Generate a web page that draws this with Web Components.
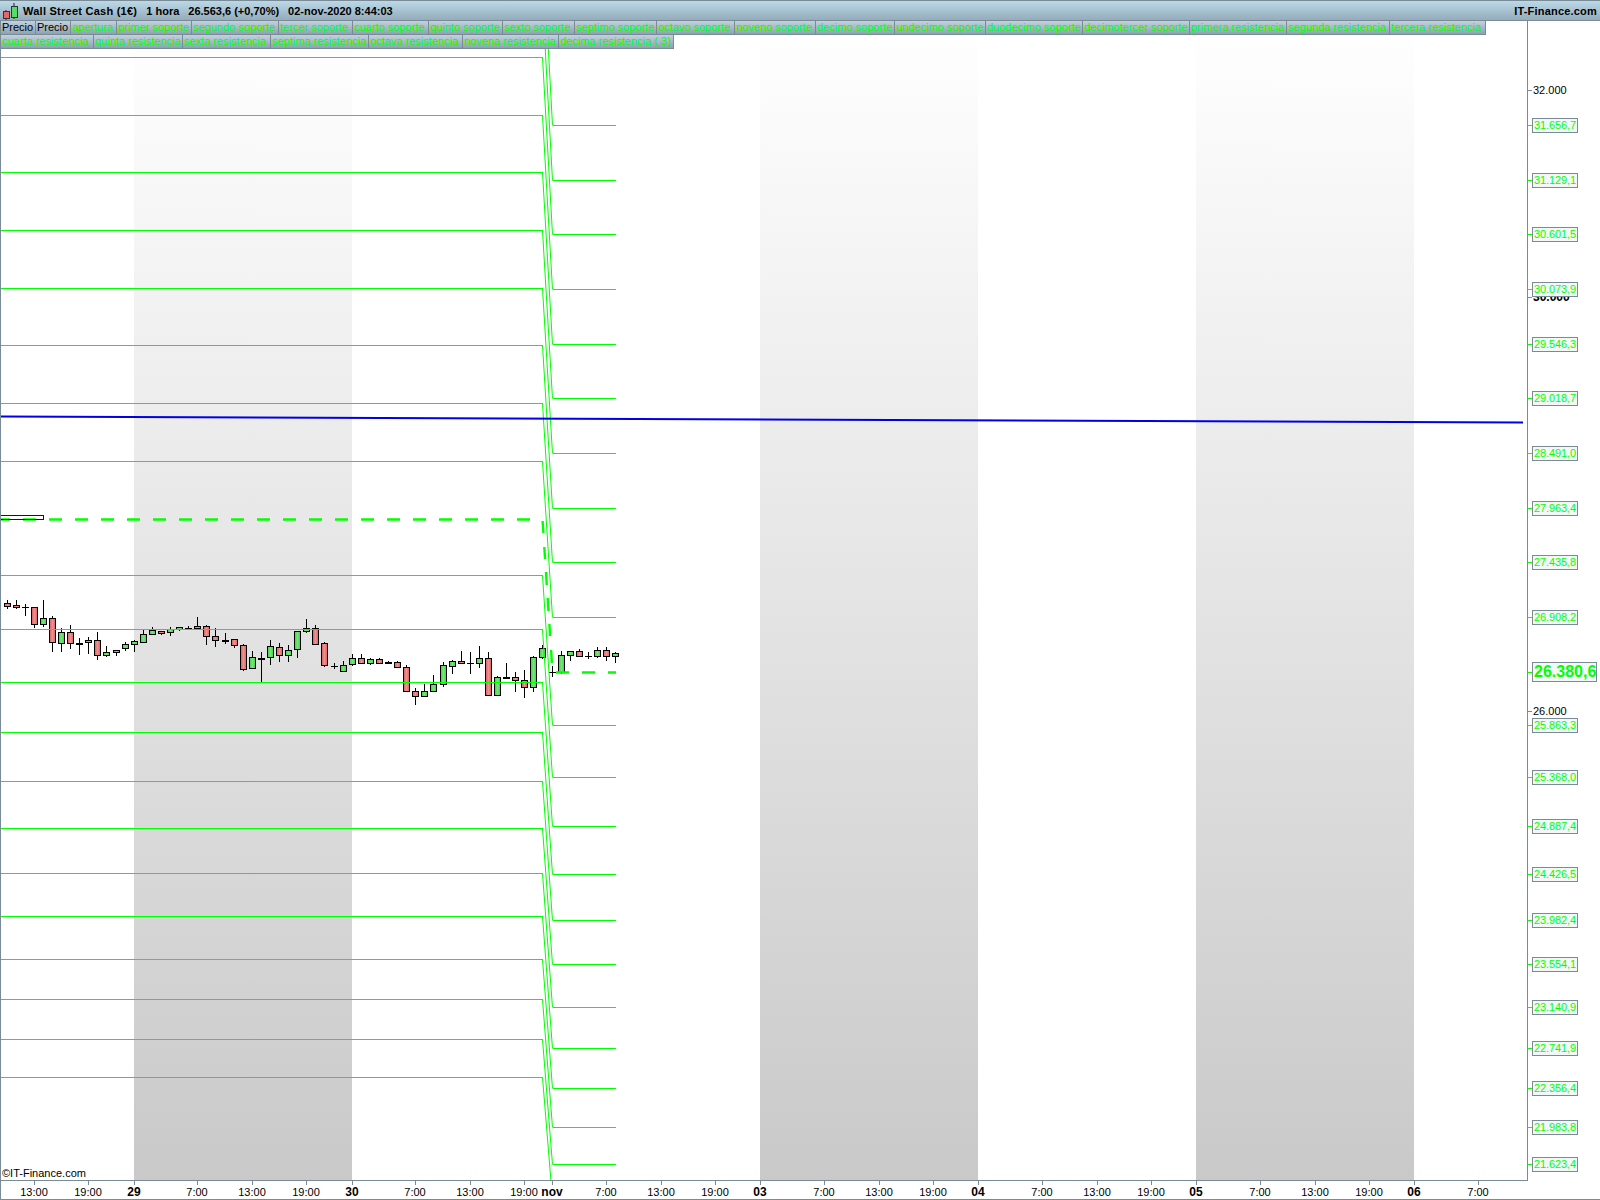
<!DOCTYPE html>
<html lang="es">
<head>
<meta charset="utf-8">
<title>Wall Street Cash</title>
<style>
  html, body { margin: 0; padding: 0; background: #fff; }
</style>
</head>
<body>
<chart-window>
  <title-bar slot="title">
    <span style="letter-spacing:.25px">Wall Street Cash (1€)</span>
    <span>1 hora</span>
    <span>26.563,6 (+0,70%)</span>
    <span>02-nov-2020 8:44:03</span>
    <span slot="right" style="letter-spacing:.2px">IT-Finance.com</span>
  </title-bar>
  <price-plot slot="plot">
    <legend-chip w="36" dark>Precio</legend-chip>
    <legend-chip w="36" dark>Precio</legend-chip>
    <legend-chip w="47">apertura</legend-chip>
    <legend-chip w="76">primer soporte</legend-chip>
    <legend-chip w="88">segundo soporte</legend-chip>
    <legend-chip w="75">tercer soporte</legend-chip>
    <legend-chip w="77">cuarto soporte</legend-chip>
    <legend-chip w="75">quinto soporte</legend-chip>
    <legend-chip w="73">sexto soporte</legend-chip>
    <legend-chip w="83">septimo soporte</legend-chip>
    <legend-chip w="79">octavo soporte</legend-chip>
    <legend-chip w="82">noveno soporte</legend-chip>
    <legend-chip w="80">decimo soporte</legend-chip>
    <legend-chip w="92">undecimo soporte</legend-chip>
    <legend-chip w="98">duodecimo soporte</legend-chip>
    <legend-chip w="108">decimotercer soporte</legend-chip>
    <legend-chip w="98">primera resistencia</legend-chip>
    <legend-chip w="104">segunda resistencia</legend-chip>
    <legend-chip w="97">tercera resistencia</legend-chip>
    <legend-chip w="94">cuarta resistencia</legend-chip>
    <legend-chip w="90">quinta resistencia</legend-chip>
    <legend-chip w="89">sexta resistencia</legend-chip>
    <legend-chip w="99">septima resistencia</legend-chip>
    <legend-chip w="95">octava resistencia</legend-chip>
    <legend-chip w="97">novena resistencia</legend-chip>
    <legend-chip w="116">decima resistencia ( 3)</legend-chip>
  </price-plot>
  <price-axis slot="axis">
    <price-tag y="90" kind="plain">32.000</price-tag>
    <price-tag y="297" kind="major">30.000</price-tag>
    <price-tag y="711" kind="plain">26.000</price-tag>
    <price-tag y="125">31.656,7</price-tag>
    <price-tag y="180">31.129,1</price-tag>
    <price-tag y="234">30.601,5</price-tag>
    <price-tag y="289">30.073,9</price-tag>
    <price-tag y="344">29.546,3</price-tag>
    <price-tag y="398">29.018,7</price-tag>
    <price-tag y="453">28.491,0</price-tag>
    <price-tag y="508">27.963,4</price-tag>
    <price-tag y="562">27.435,8</price-tag>
    <price-tag y="617">26.908,2</price-tag>
    <price-tag y="672" kind="current">26.380,6</price-tag>
    <price-tag y="725">25.863,3</price-tag>
    <price-tag y="777">25.368,0</price-tag>
    <price-tag y="826">24.887,4</price-tag>
    <price-tag y="874">24.426,5</price-tag>
    <price-tag y="920">23.982,4</price-tag>
    <price-tag y="964">23.554,1</price-tag>
    <price-tag y="1007">23.140,9</price-tag>
    <price-tag y="1048">22.741,9</price-tag>
    <price-tag y="1088">22.356,4</price-tag>
    <price-tag y="1127">21.983,8</price-tag>
    <price-tag y="1164">21.623,4</price-tag>
  </price-axis>
  <time-axis slot="time">
    <time-label x="34">13:00</time-label>
    <time-label x="88">19:00</time-label>
    <time-label x="134" major>29</time-label>
    <time-label x="197">7:00</time-label>
    <time-label x="252">13:00</time-label>
    <time-label x="306">19:00</time-label>
    <time-label x="352" major>30</time-label>
    <time-label x="415">7:00</time-label>
    <time-label x="470">13:00</time-label>
    <time-label x="524">19:00</time-label>
    <time-label x="552" major>nov</time-label>
    <time-label x="606">7:00</time-label>
    <time-label x="661">13:00</time-label>
    <time-label x="715">19:00</time-label>
    <time-label x="760" major>03</time-label>
    <time-label x="824">7:00</time-label>
    <time-label x="879">13:00</time-label>
    <time-label x="933">19:00</time-label>
    <time-label x="978" major>04</time-label>
    <time-label x="1042">7:00</time-label>
    <time-label x="1097">13:00</time-label>
    <time-label x="1151">19:00</time-label>
    <time-label x="1196" major>05</time-label>
    <time-label x="1260">7:00</time-label>
    <time-label x="1315">13:00</time-label>
    <time-label x="1369">19:00</time-label>
    <time-label x="1414" major>06</time-label>
    <time-label x="1478">7:00</time-label>
  </time-axis>
</chart-window>

<script>
const FRAME = '#7a8b98';
const SANS = '"Liberation Sans", Arial, sans-serif';

// Outer window: title on top, plot + price scale in the middle, time scale below
class ChartWindow extends HTMLElement {
    connectedCallback() {
        this.attachShadow({ mode: 'open' });
        this.shadowRoot.innerHTML = `
        <style>
          :host {
            display: grid;
            grid-template-rows: 21px 1160px 19px;
            grid-template-columns: 1527px 72px;
            width: 1599px;
            height: 1200px;
            border-left: 1px solid ${FRAME};
            font-family: ${SANS};
            font-size: 11px;
          }
          ::slotted([slot="title"]) { grid-column: 1 / 3; margin-left: -1px; }
          ::slotted([slot="time"]) { grid-column: 1 / 3; }
        </style>
        <slot name="title"></slot>
        <slot name="plot"></slot>
        <slot name="axis"></slot>
        <slot name="time"></slot>
        `;
    }
}
customElements.define('chart-window', ChartWindow);

class TitleBar extends HTMLElement {
    connectedCallback() {
        this.attachShadow({ mode: 'open' });
        this.shadowRoot.innerHTML = `
        <style>
          :host {
            display: flex;
            align-items: center;
            box-sizing: border-box;
            height: 21px;
            border-top: 1px solid ${FRAME};
            border-bottom: 1px solid ${FRAME};
            background: linear-gradient(#bcd8e6, #94acbb);
            font: bold 11px ${SANS};
            color: #000;
            padding-right: 3px;
          }
          svg { flex: none; margin-right: 4px; }
          .items { display: flex; gap: 9px; }
          .right { margin-left: auto; }
        </style>
        <svg width="19" height="19" viewBox="0 0 19 19">
          <path d="M6 9v2M6 18v1M14 2v3M14 17v1" stroke="#222" stroke-width="1" fill="none"/>
          <rect x="3.5" y="10.5" width="6" height="7" fill="#e8666a" stroke="#333"/>
          <rect x="11.5" y="5.5" width="6" height="11" fill="#55dd66" stroke="#333"/>
        </svg>
        <div class="items"><slot></slot></div>
        <div class="right"><slot name="right"></slot></div>
        `;
    }
}
customElements.define('title-bar', TitleBar);

// w is the chip width read off the chart; the neighbours share a border
class LegendChip extends HTMLElement {
    connectedCallback() {
        this.attachShadow({ mode: 'open' });
        this.shadowRoot.innerHTML = `
        <style>
          :host {
            display: block;
            box-sizing: border-box;
            width: ${this.getAttribute('w')}px;
            height: 15px;
            margin: 0 -1px -1px 0;
            padding: 0 0 0 1px;
            border: 1px solid ${FRAME};
            background: linear-gradient(#c2d2dd, #8da2b1);
            font: 11px/13px ${SANS};
            color: ${this.hasAttribute('dark') ? '#000' : '#00ff00'};
            white-space: nowrap;
          }
        </style>
        <slot></slot>
        `;
    }
}
customElements.define('legend-chip', LegendChip);

// The drawing area. Numbers are page pixels, measured on the chart.
const LEFT_LEVELS = [-59, -1, 57, 115, 172, 230, 288, 345, 403, 461, 575, 629, 682, 732, 781, 828, 873, 916, 959, 999, 1039, 1077];
const RIGHT_LEVELS = [125, 180, 234, 289, 344, 398, 453, 508, 562, 617, 725, 777, 826, 874, 920, 964, 1007, 1048, 1088, 1127, 1164, 1199];

// [x, wickTop, wickBottom, bodyTop, bodyBottom, colour] in crop pixels: 3x, origin (0,590)
const CANDLES_A = [
    [22,30,56,40,47,'r'],[49,30,56,46,52,'r'],[76,42,77,51,51,'d'],[103,52,113,52,101,'r'],[130,30,110,85,101,'g'],
    [157,78,185,85,157,'r'],[184,115,185,127,160,'g'],[211,105,176,127,160,'r'],[238,145,194,158,160,'f'],[265,142,191,151,157,'g'],
    [292,126,209,151,196,'r'],[319,168,200,187,196,'g'],[349,181,197,181,187,'g'],[376,155,182,163,175,'g'],[403,150,185,154,163,'g'],
    [430,120,158,133,155,'g'],[457,112,136,121,133,'g'],[484,122,134,124,130,'r'],[511,110,137,118,127,'g'],[538,110,122,112,118,'g'],
    [565,109,118,113,115,'f'],[592,82,118,109,115,'g'],[619,106,165,109,139,'r'],[646,114,170,139,151,'r'],[676,130,163,149,151,'f'],
    [703,148,173,148,166,'r'],[730,163,242,166,238,'r'],[757,184,238,202,235,'g'],[784,186,276,203,205,'f'],[811,151,224,169,202,'g'],
    [838,160,215,172,196,'r'],[865,166,215,181,196,'g'],[892,124,204,124,178,'g'],[919,88,128,115,124,'g'],[946,106,163,115,163,'r']
];
// same, origin (310,610)
const CANDLES_B = [
    [43,97,170,100,166,'r'],[73,160,176,167,167,'d'],[100,154,187,166,184,'g'],[127,133,167,145,163,'g'],[154,133,163,145,160,'r'],
    [181,145,166,148,160,'g'],[208,145,163,148,160,'r'],[235,154,163,157,160,'f'],[262,154,175,157,172,'r'],[289,166,247,172,244,'r'],
    [316,235,285,244,259,'r'],[343,223,260,244,259,'g'],[370,196,244,223,244,'g'],[400,157,230,166,223,'g'],[427,151,191,154,169,'g'],
    [454,124,162,154,160,'r'],[481,125,191,160,160,'d'],[508,109,173,145,160,'g'],[535,127,256,145,256,'r'],[562,199,256,202,256,'g'],
    [589,160,207,200,203,'f'],[616,187,245,202,211,'r'],[643,181,263,211,232,'r'],[670,139,245,142,232,'g'],[697,106,148,115,142,'g'],
    [727,169,200,187,187,'d'],[754,123,193,136,187,'g'],[781,124,152,124,136,'g'],[808,118,140,124,139,'r'],[835,127,146,139,139,'d'],
    [862,112,143,121,139,'g'],[889,112,152,121,139,'r'],[916,125,158,130,139,'g']
];

function candleSvg(list, ox, oy) {
    let out = '';
    for (const [cx, wt, wb, bt, bb, kind] of list) {
        const x = ox + Math.floor(cx / 3);
        const y = v => oy + Math.round(v / 3);
        out += `<path d="M${x + .5} ${y(wt)}V${y(wb)}" stroke="#000"/>`;
        if (kind === 'd') {
            out += `<path d="M${x - 3} ${y(bt) + .5}H${x + 4}" stroke="#000"/>`;
        } else if (kind === 'f') {
            out += `<rect x="${x - 3}" y="${y(bt)}" width="7" height="2" fill="#000"/>`;
        } else {
            out += `<rect x="${x - 2.5}" y="${y(bt) + .5}" width="6" height="${y(bb) - y(bt)}" fill="url(#${kind === 'r' ? 'red' : 'grn'})" stroke="#000"/>`;
        }
    }
    return out;
}

class PricePlot extends HTMLElement {
    connectedCallback() {
        this.attachShadow({ mode: 'open' });
        const bands = [[134, 352], [760, 978], [1196, 1414]]
            .map(([a, b]) => `<rect x="${a}" y="21" width="${b - a}" height="1159" fill="url(#band)"/>`).join('');
        const levels = LEFT_LEVELS.map((l, i) => {
            const r = RIGHT_LEVELS[i];
            return `<path d="M1 ${l + .5}H542.5" shape-rendering="crispEdges"/>` +
                   `<path d="M542.5 ${l + .5}L552.5 ${r + .5}"/>` +
                   `<path d="M552.5 ${r + .5}H615.5" shape-rendering="crispEdges"/>`;
        }).join('');
        // opening level, dashed on each of its three legs
        const slopeDashes = [[521, 533], [547, 559], [572, 585], [598, 611], [624, 636], [650, 663]]
            .map(([a, b]) => {
                const at = y => (542.5 + (y - 519) * 10 / 153).toFixed(1);
                return `M${at(a)} ${a}L${at(b)} ${b}`;
            }).join('');
        this.shadowRoot.innerHTML = `
        <style>
          :host {
            display: block;
            position: relative;
            overflow: hidden;
            box-sizing: border-box;
            width: 1527px;
            height: 1160px;
            border-right: 1px solid ${FRAME};
            border-bottom: 1px solid ${FRAME};
          }
          svg { display: block; }
          .legend {
            position: absolute;
            top: -1px;
            left: -1px;
            right: 0;
            display: flex;
            flex-wrap: wrap;
            padding-right: 1px;
          }
          .copy {
            position: absolute;
            left: 1px;
            bottom: 0;
            font: 11px/14px ${SANS};
            color: #000;
          }
        </style>
        <svg width="1526" height="1159" viewBox="1 21 1526 1159">
          <defs>
            <linearGradient id="band" gradientUnits="userSpaceOnUse" x1="0" y1="21" x2="0" y2="1180">
              <stop offset="0" stop-color="#ffffff"/><stop offset="1" stop-color="#c9c9c9"/>
            </linearGradient>
            <linearGradient id="red"><stop offset="0" stop-color="#d95f5f"/><stop offset=".5" stop-color="#f09090"/><stop offset="1" stop-color="#d96060"/></linearGradient>
            <linearGradient id="grn"><stop offset="0" stop-color="#48cc48"/><stop offset=".5" stop-color="#72e872"/><stop offset="1" stop-color="#48cc48"/></linearGradient>
          </defs>
          ${bands}
          <g stroke-width="1" fill="none">${candleSvg(CANDLES_A, 0, 590)}${candleSvg(CANDLES_B, 310, 610)}</g>
          <g stroke="#00ff00" stroke-width="1" fill="none">${levels}</g>
          <g stroke="#00ff00" stroke-width="2.4" fill="none">
            <path d="M1 519.5H542" stroke-dasharray="13 13" stroke-dashoffset="4"/>
            <path d="${slopeDashes}"/>
            <path d="M556 672.5H616" stroke-dasharray="13 13"/>
          </g>
          <rect x="0.5" y="515.5" width="43" height="4" fill="none" stroke="#0000d0"/>
          <path d="M1 416.5L1523 422.5" stroke="#0000e6" stroke-width="2" fill="none"/>
        </svg>
        <div class="legend"><slot></slot></div>
        <div class="copy">©IT-Finance.com</div>
        `;
    }
}
customElements.define('price-plot', PricePlot);

class PriceAxis extends HTMLElement {
    connectedCallback() {
        this.attachShadow({ mode: 'open' });
        this.shadowRoot.innerHTML = `
        <style>
          :host { display: block; position: relative; width: 72px; height: 1160px; }
        </style>
        <slot></slot>
        `;
    }
}
customElements.define('price-axis', PriceAxis);

// One value on the scale. Its y attribute is the price position, so it is placed absolutely.
class PriceTag extends HTMLElement {
    connectedCallback() {
        this.attachShadow({ mode: 'open' });
        const kind = this.getAttribute('kind') || 'level';
        const y = Number(this.getAttribute('y')) - 21;
        const h = kind === 'current' ? 20 : 15;
        const boxed = kind === 'level' || kind === 'current';
        const width = kind === 'current' ? 65 : 46;
        this.shadowRoot.innerHTML = `
        <style>
          :host {
            position: absolute;
            left: 0;
            top: ${y - Math.floor(h / 2)}px;
            display: flex;
            align-items: center;
            height: ${h}px;
            white-space: nowrap;
          }
          .tick { width: 4px; height: 1px; background: ${boxed ? '#00ff00' : FRAME}; }
          .box {
            box-sizing: border-box;
            height: ${h}px;
            padding: 0 0 0 1px;
            ${boxed ? `width: ${width}px; border: 1px solid ${FRAME}; background: #f4f7f7;` : ''}
            color: ${boxed ? '#00ff00' : '#000'};
            font: ${kind === 'current' ? 'bold 16px/18px' : (kind === 'major' ? 'bold 12px/15px' : '11px/13px')} ${SANS};
            ${boxed ? '' : 'line-height: 15px;'}
            ${kind === 'level' ? 'letter-spacing: -.1px;' : ''}
          }
        </style>
        <div class="tick"></div>
        <div class="box"><slot></slot></div>
        `;
    }
}
customElements.define('price-tag', PriceTag);

class TimeAxis extends HTMLElement {
    connectedCallback() {
        this.attachShadow({ mode: 'open' });
        this.shadowRoot.innerHTML = `
        <style>
          :host {
            display: block;
            position: relative;
            box-sizing: border-box;
            height: 19px;
            border-bottom: 1px solid ${FRAME};
          }
        </style>
        <slot></slot>
        `;
    }
}
customElements.define('time-axis', TimeAxis);

class TimeLabel extends HTMLElement {
    connectedCallback() {
        this.attachShadow({ mode: 'open' });
        const major = this.hasAttribute('major');
        this.shadowRoot.innerHTML = `
        <style>
          :host {
            position: absolute;
            top: 0;
            left: ${Number(this.getAttribute('x')) - 1}px;
            width: 0;
            display: flex;
            flex-direction: column;
            align-items: center;
            white-space: nowrap;
          }
          .tick { width: 1px; height: 4px; background: ${FRAME}; flex: none; margin-bottom: 1px; }
          .text { font: ${major ? 'bold 12px' : '11px'}/13px ${SANS}; color: #000; }
        </style>
        <div class="tick"></div>
        <div class="text"><slot></slot></div>
        `;
    }
}
customElements.define('time-label', TimeLabel);
</script>
</body>
</html>
